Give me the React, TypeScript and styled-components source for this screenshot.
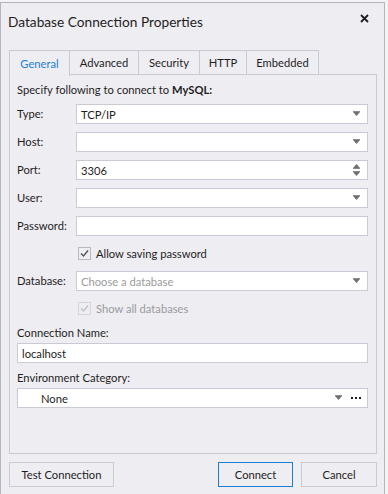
import styled, { createGlobalStyle } from "styled-components"

const GlobalStyle = createGlobalStyle`
  html, body {
    margin: 0;
    padding: 0;
    background: #f4f4f6;
  }
  body {
    font-family: Lato, "Noto Sans", sans-serif;
    font-size: 11.2px;
    color: #1e1e1e;
  }
`

const Window = styled.div`
  margin-top: 2px;
  width: 385px;
  height: 492px;
  box-sizing: border-box;
  background: #eeedf2;
  border: 1px solid #b4b3c0;
  border-bottom: none;
  display: flex;
  flex-direction: column;
`

const TitleBar = styled.div`
  height: 47px;
  display: flex;
  align-items: flex-start;
  justify-content: space-between;
  padding: 0 0 0 7px;
`

const Title = styled.h1`
  margin: 10px 0 0;
  font-size: 13.7px;
  font-weight: 400;
  color: #1e1e1e;
`

const CloseButton = styled.div`
  width: 14px;
  height: 14px;
  margin: 8px 13px 0 0;
  display: flex;
  align-items: center;
  justify-content: center;
`

const Body = styled.div`
  flex: 1;
  display: flex;
  flex-direction: column;
  padding: 0 7px 0 8px;
`

const TabStrip = styled.div`
  display: flex;
  height: 25px;
  position: relative;
  z-index: 1;
`

const Tab = styled.div<{ $w: number; $active?: boolean }>`
  width: ${(p) => p.$w}px;
  box-sizing: border-box;
  height: ${(p) => (p.$active ? 26 : 25)}px;
  margin-left: -1px;
  border: 1px solid #cac9d4;
  border-bottom: ${(p) => (p.$active ? "none" : "1px solid #cac9d4")};
  background: #eeedf2;
  color: ${(p) => (p.$active ? "#1c7ed6" : "#1e1e1e")};
  display: flex;
  align-items: center;
  justify-content: center;
  padding-bottom: 1px;
  &:first-child {
    margin-left: 0;
  }
`

const Panel = styled.div`
  flex: 1;
  border: 1px solid #cac9d4;
  margin-top: -1px;
  padding: 8px 8px 0 7px;
  display: flex;
  flex-direction: column;
  gap: 8px;
`

const Intro = styled.div`
  height: 13px;
  line-height: 13px;
  b {
    font-weight: 700;
  }
`

const Row = styled.div`
  display: grid;
  grid-template-columns: 59px 1fr;
  align-items: center;
`

const Label = styled.span`
  display: block;
  line-height: 14px;
  color: #1e1e1e;
`

const Field = styled.div`
  height: 20px;
  box-sizing: border-box;
  background: #fff;
  border: 1px solid #cbc9d5;
  display: flex;
  align-items: center;
  padding: 0 6px 0 4px;
`

const FieldText = styled.span<{ $muted?: boolean; $indent?: number }>`
  flex: 1;
  padding-left: ${(p) => p.$indent ?? 0}px;
  color: ${(p) => (p.$muted ? "#9b9b9b" : "#1e1e1e")};
`

const Stack = styled.div`
  display: flex;
  flex-direction: column;
  gap: 3px;
`

const CheckRow = styled.label<{ $disabled?: boolean }>`
  height: 19px;
  margin-left: 61px;
  display: flex;
  align-items: center;
  gap: 5px;
  color: ${(p) => (p.$disabled ? "#9b9b9b" : "#1e1e1e")};
`

const Box = styled.span<{ $disabled?: boolean }>`
  width: 11px;
  height: 11px;
  border: 1px solid ${(p) => (p.$disabled ? "#d6d5de" : "#b9b8c3")};
  background: #eeedf2;
  display: flex;
  align-items: center;
  justify-content: center;
`

const Dots = styled.span`
  margin-left: 8px;
  display: flex;
  gap: 2px;
  span {
    width: 2px;
    height: 2px;
    background: #1e1e1e;
  }
`

const Footer = styled.div`
  height: 40px;
  display: flex;
  align-items: flex-start;
  padding-top: 8px;
  box-sizing: border-box;
  gap: 8px;
`

const Button = styled.button<{ $w: number; $primary?: boolean }>`
  width: ${(p) => p.$w}px;
  height: 25px;
  font: inherit;
  color: #1e1e1e;
  background: #eeedf2;
  border: 1px solid ${(p) => (p.$primary ? "#1c7ed6" : "#cac9d4")};
  padding: 0;
  &:first-child {
    margin-right: auto;
  }
`

function Arrow() {
  return (
    <svg width="8" height="6" viewBox="0 0 8 6">
      <rect x="0" y="0" width="7" height="1" fill="#8a8a8a" />
      <path d="M0 1 H7 L3.5 5 Z" fill="#707070" />
    </svg>
  )
}

function Spin() {
  return (
    <svg width="8" height="14" viewBox="0 0 8 14">
      <path d="M0 5 L3.5 1 L7 5 Z" fill="#707070" />
      <rect x="0" y="5" width="7" height="1" fill="#8a8a8a" />
      <rect x="0" y="8" width="7" height="1" fill="#8a8a8a" />
      <path d="M0 9 H7 L3.5 13 Z" fill="#707070" />
    </svg>
  )
}

function Check({ color }: { color: string }) {
  return (
    <svg width="9" height="9" viewBox="0 0 9 9">
      <path d="M1 4.5 L3.5 7 L8 1.5" fill="none" stroke={color} strokeWidth="1.4" />
    </svg>
  )
}

function Combo({ text, muted }: { text?: string; muted?: boolean }) {
  return (
    <Field>
      <FieldText $muted={muted}>{text}</FieldText>
      <Arrow />
    </Field>
  )
}

export default function App() {
  return (
    <>
      <GlobalStyle />
      <Window>
        <TitleBar>
          <Title>Database Connection Properties</Title>
          <CloseButton>
            <svg width="9" height="9" viewBox="0 0 9 9">
              <path d="M1 1 L8 8 M8 1 L1 8" stroke="#1e1e1e" strokeWidth="1.8" />
            </svg>
          </CloseButton>
        </TitleBar>
        <Body>
          <TabStrip>
            <Tab $w={61} $active>General</Tab>
            <Tab $w={70}>Advanced</Tab>
            <Tab $w={62}>Security</Tab>
            <Tab $w={48}>HTTP</Tab>
            <Tab $w={73}>Embedded</Tab>
          </TabStrip>
          <Panel>
            <Intro>
              Specify following to connect to <b>MySQL:</b>
            </Intro>
            <Row>
              <Label>Type:</Label>
              <Combo text="TCP/IP" />
            </Row>
            <Row>
              <Label>Host:</Label>
              <Combo />
            </Row>
            <Row>
              <Label>Port:</Label>
              <Field>
                <FieldText>3306</FieldText>
                <Spin />
              </Field>
            </Row>
            <Row>
              <Label>User:</Label>
              <Combo />
            </Row>
            <Row>
              <Label>Password:</Label>
              <Field />
            </Row>
            <CheckRow>
              <Box>
                <Check color="#555" />
              </Box>
              Allow saving password
            </CheckRow>
            <Row>
              <Label>Database:</Label>
              <Combo text="Choose a database" muted />
            </Row>
            <CheckRow $disabled>
              <Box $disabled>
                <Check color="#c4c4c4" />
              </Box>
              Show all databases
            </CheckRow>
            <Stack>
              <Label>Connection Name:</Label>
              <Field>
                <FieldText>localhost</FieldText>
              </Field>
            </Stack>
            <Stack>
              <Label>Environment Category:</Label>
              <Field>
                <FieldText $indent={19}>None</FieldText>
                <Arrow />
                <Dots>
                  <span />
                  <span />
                  <span />
                </Dots>
              </Field>
            </Stack>
          </Panel>
          <Footer>
            <Button $w={105}>Test Connection</Button>
            <Button $w={75} $primary>Connect</Button>
            <Button $w={76}>Cancel</Button>
          </Footer>
        </Body>
      </Window>
    </>
  )
}
